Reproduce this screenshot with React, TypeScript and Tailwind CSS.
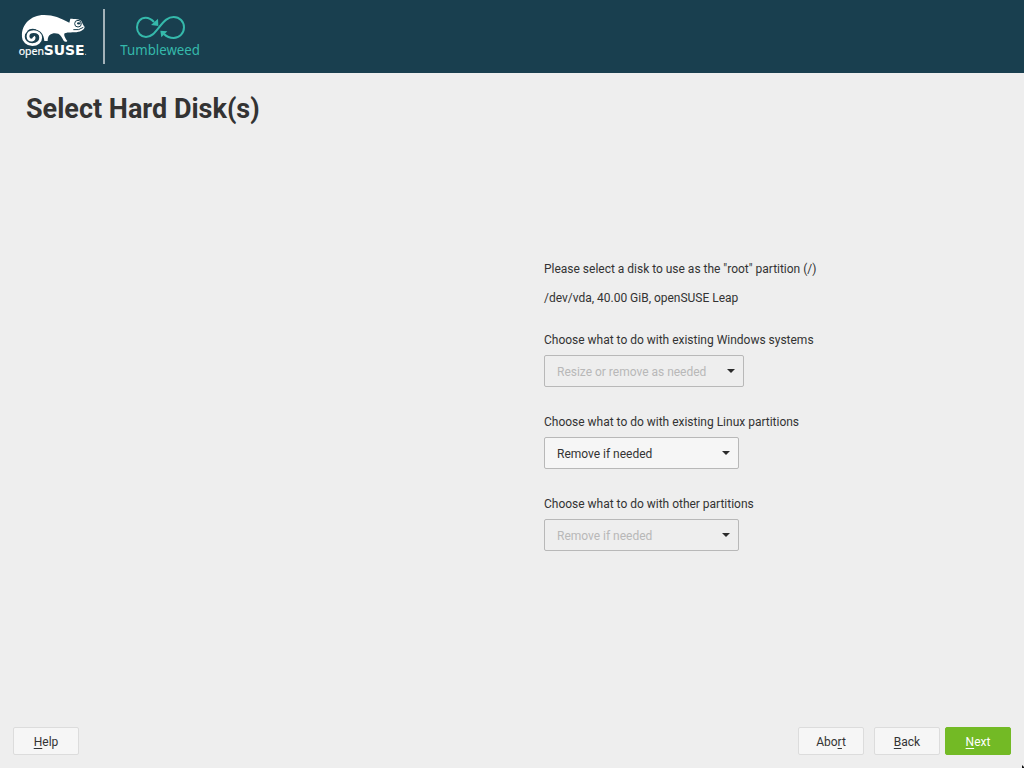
import React from "react";

function Geeko() {
  return (
    <svg width="90" height="60" viewBox="0 0 270 180" className="block shrink-0" role="img">
      <path
        fill="#fff"
        d="M36 97 C34 62 62 33 102 33 C132 33 150 42 178 56 L181 44 C194 44 210 46 214 51 C217 57 219 63 224 69 C222 79 210 84 194 85 C180 86 172 84 164 88 C160 94 166 103 172 111 C169 115 164 114 161 110 C157 103 152 92 145 89 C137 87 127 86 119 93 C115 97 113 103 113 111 L103 111 C102 101 100 92 92 84 C80 73 58 73 46 91 Z"
      />
      <circle cx="68" cy="98" r="24" fill="#193f4f" />
      <path
        fill="none"
        stroke="#fff"
        strokeWidth="8.5"
        d="M50 78 C43 84 40 90 40 98 C40 111 52 122 67 122 C82 122 92 113 92 101 C92 90 83 83 71 83 C60 83 54 89 54 97 C54 105 60 109 66 108 C72 107 74 102 71 98"
      />
      <circle cx="204" cy="59" r="10" fill="#fff" stroke="#193f4f" strokeWidth="3" />
      <ellipse cx="206" cy="58" rx="5" ry="3.5" fill="#193f4f" />
      <path d="M190 77 Q207 80 220 70" fill="none" stroke="#193f4f" strokeWidth="3" />
      <text x="26" y="152" fill="#fff" stroke="#fff" strokeWidth="0.5" fontFamily="'Noto Sans', sans-serif" fontSize="31" textLength="76" lengthAdjust="spacingAndGlyphs">open</text>
      <text x="101" y="153" fill="#fff" fontFamily="'DejaVu Sans', sans-serif" fontWeight="700" fontSize="41" textLength="123" lengthAdjust="spacingAndGlyphs">SUSE</text>
      <circle cx="227" cy="151" r="1.5" fill="#fff" />
    </svg>
  );
}

function Tumbleweed() {
  return (
    <svg width="115" height="69" viewBox="0 0 345 207" className="block shrink-0" role="img">
      <g fill="none" stroke="#35b9ab" strokeWidth="6">
        <path d="M177 54 C168 44 160 41 152 41 C137 41 126 54 126 70 C126 87 138 99 153 99 C170 99 180 85 193 69 C208 50 219 39 236 39 C254 39 267 53 267 70 C267 88 253 102 236 102 C224 102 214 97 207 90" />
      </g>
      <path fill="#35b9ab" d="M189 44 L190 66 L168 63 Z M196 80 L217 82 L199 100 Z" />
      <text x="76" y="154" fill="#35b9ab" fontFamily="'Noto Sans', sans-serif" fontSize="41" textLength="239" lengthAdjust="spacingAndGlyphs">Tumbleweed</text>
    </svg>
  );
}

type SelectProps = { label: string; value: string; width: string; disabled?: boolean };

function Select({ label, value, width, disabled }: SelectProps) {
  return (
    <div className="h-[82px]">
      <div className="h-[22px] leading-[14px]">{label}</div>
      <button
        disabled={disabled}
        className={`flex h-8 items-center justify-between rounded-[2px] border border-[#b8b8b8] pr-[8px] pl-3 pt-px ${width} ${
          disabled ? "text-[#b8b8b8]" : "bg-[#f6f6f6] text-[#333]"
        }`}
      >
        <span>{value}</span>
        <svg width="8" height="4" viewBox="0 0 8 4" className="mb-[2px]">
          <path d="M0 0H8L4 4Z" fill="#2b2b2b" />
        </svg>
      </button>
    </div>
  );
}

type ButtonProps = { before?: string; hot: string; after: string; primary?: boolean; className?: string };

function FooterButton({ before = "", hot, after, primary, className = "" }: ButtonProps) {
  return (
    <button
      className={`flex h-7 w-[66px] items-center justify-center rounded-[2px] border pt-px leading-[14px] ${
        primary ? "border-[#73ba25] bg-[#73ba25] text-white" : "border-[#dcdcdc] bg-[#f6f6f6]"
      } ${className}`}
    >
      <span>
        {before}
        <span className="underline decoration-1 underline-offset-[2px] [text-decoration-skip-ink:none]">{hot}</span>
        {after}
      </span>
    </button>
  );
}

export default function App() {
  return (
    <div className="flex h-[768px] w-[1024px] flex-col overflow-hidden bg-[#eee] font-['Roboto',sans-serif] text-[12px] text-[#333]">
      <header className="flex h-[73px] shrink-0 bg-[#193f4f] pl-[10px] pt-1">
        <Geeko />
        <div className="mt-[5px] ml-[3px] h-[55px] w-[2px] shrink-0 bg-[#a3b2b9]" />
        <div className="-ml-[10px]">
          <Tumbleweed />
        </div>
      </header>
      <h1 className="mt-5 ml-[26px] h-8 text-[27px] leading-8 font-bold">Select Hard Disk(s)</h1>
      <main className="mt-[137px] ml-[544px] grow tracking-[-0.01px]">
        <p className="h-[29px] leading-[14px]">Please select a disk to use as the "root" partition (/)</p>
        <p className="h-[42px] leading-[14px]">/dev/vda, 40.00 GiB, openSUSE Leap</p>
        <Select label="Choose what to do with existing Windows systems" value="Resize or remove as needed" width="w-[200px]" disabled />
        <Select label="Choose what to do with existing Linux partitions" value="Remove if needed" width="w-[195px]" />
        <Select label="Choose what to do with other partitions" value="Remove if needed" width="w-[195px]" disabled />
      </main>
      <footer className="relative flex h-[41px] shrink-0 items-start px-[13px]">
        <FooterButton hot="H" after="elp" />
        <FooterButton before="Abo" hot="r" after="t" className="ml-auto" />
        <FooterButton hot="B" after="ack" className="ml-[10px]" />
        <FooterButton hot="N" after="ext" primary className="ml-[5px]" />
        <svg width="2" height="3" viewBox="0 0 2 3" className="absolute right-0 bottom-0">
          <path d="M0 0L2 2V3H0Z" fill="#111" />
        </svg>
      </footer>
    </div>
  );
}
